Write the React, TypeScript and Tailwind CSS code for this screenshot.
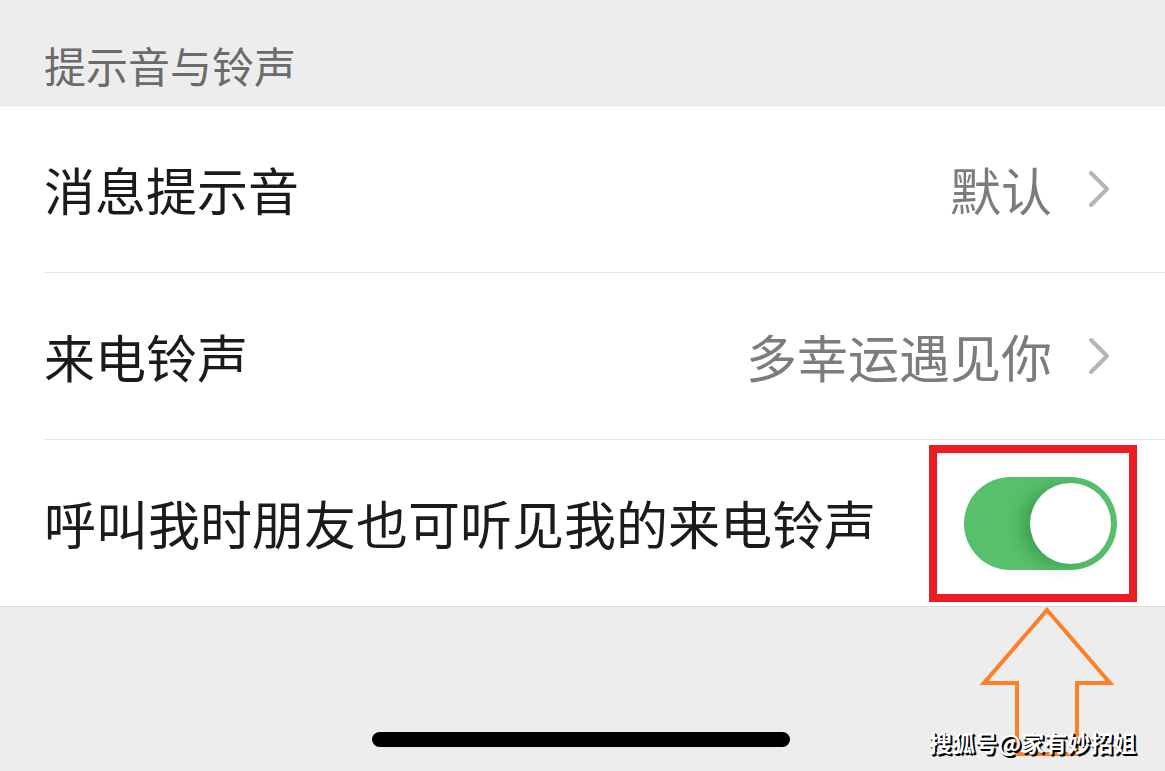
function Chevron() {
  return (
    <svg width="22" height="38" viewBox="0 0 22 38" className="shrink-0">
      <polyline points="3,3 19,19 3,35" fill="none" stroke="#b5b5b5" strokeWidth="4" strokeLinecap="round" strokeLinejoin="round" />
    </svg>
  )
}

function Row({ label, value, last }: { label: string; value?: string; last?: boolean }) {
  return (
    <div className="pl-[44px]">
      <div className={`h-[167px] flex flex-row items-center pr-[55px] ${last ? "" : "border-b border-[#e3e3e3]"}`}>
        <div className="flex-1 text-[51px] text-[#1b1b1b] leading-none">{label}</div>
        {value && (
          <div className="flex flex-row items-center gap-[36px]">
            <span className="text-[51px] text-[#7c7c7c] leading-none">{value}</span>
            <Chevron />
          </div>
        )}
      </div>
    </div>
  )
}

export default function App() {
  return (
    <div
      className="relative w-[1165px] h-[771px] overflow-hidden bg-[#ededed] flex flex-col"
      style={{ fontFamily: '"Noto Sans CJK SC", "Noto Sans", sans-serif' }}
    >
      {/* section title */}
      <div className="h-[106px] pl-[44px] pt-[44px] text-[42px] text-[#6b6b6b] leading-none border-b border-[#e2e2e2]">
        提示音与铃声
      </div>

      {/* settings rows */}
      <div className="bg-white border-b border-[#dcdcdc]">
        <Row label="消息提示音" value="默认" />
        <Row label="来电铃声" value="多幸运遇见你" />
        <div className="pl-[44px]">
          <div className="h-[166px] flex flex-row items-center pr-[48px]">
            <div className="flex-1 text-[52px] text-[#1b1b1b] leading-none">呼叫我时朋友也可听见我的来电铃声</div>
            {/* toggle */}
            <div className="relative w-[153px] h-[93px] rounded-full bg-[#57c06b]">
              <div className="absolute right-[6px] top-[6px] w-[81px] h-[81px] rounded-full bg-white shadow-[-10px_2px_14px_rgba(0,80,20,0.25)]" />
            </div>
          </div>
        </div>
      </div>

      {/* home indicator */}
      <div className="flex-1 flex flex-col justify-end items-center pb-[24px]">
        <div className="ml-[-4px] w-[418px] h-[15px] rounded-full bg-black" />
      </div>

      {/* annotation: red box */}
      <div className="absolute left-[929px] top-[445px] w-[208px] h-[157px] border-[8px] border-[#ed1c24]" />

      {/* annotation: orange arrow */}
      <svg className="absolute left-0 top-0" width="1165" height="771" viewBox="0 0 1165 771">
        <polygon
          points="1047,610 1110,683 1077,683 1077,754 1017,754 1017,683 984,683"
          fill="none"
          stroke="#ff7f27"
          strokeWidth="4"
          strokeLinejoin="miter"
        />
      </svg>

      {/* watermark */}
      <div
        className="absolute left-[929px] top-[731px] text-[23px] font-bold text-white leading-none whitespace-nowrap"
        style={{ textShadow: "2px 2px 0 #000, 1px 1px 0 #000" }}
      >
        搜狐号@家有妙招姐
      </div>
    </div>
  )
}
